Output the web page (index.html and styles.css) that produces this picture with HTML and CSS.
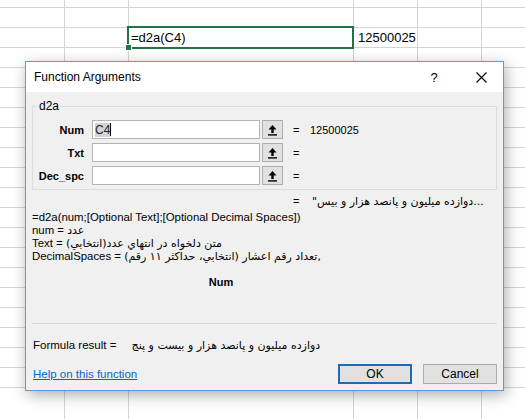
FILE: index.html
```html
<!DOCTYPE html>
<html>
<head>
<meta charset="utf-8">
<link rel="stylesheet" href="styles.css">
</head>
<body>
<div class="sheet">
  <div class="sheet-row">
    <div class="cell-sel">=d2a(C4)<span class="handle"></span></div>
    <div class="cell-val">12500025</div>
  </div>

  <div class="dialog">
    <div class="titlebar">
      <span class="title">Function Arguments</span>
      <span class="qmark">?</span>
      <span class="close">
        <svg width="11" height="11" viewBox="0 0 11 11"><path d="M0.5 0.5 L10.5 10.5 M10.5 0.5 L0.5 10.5" stroke="#000" stroke-width="1.1" fill="none"/></svg>
      </span>
    </div>
    <div class="body">
      <fieldset class="group">
        <legend>d2a</legend>
        <div class="arg">
          <span class="arg-label">Num</span>
          <div class="field">
            <div class="input"><span class="sel">C4</span><span class="caret"></span></div>
            <span class="ref-btn"><svg width="11" height="12" viewBox="0 0 11 12"><path d="M5.5 1 L1.5 5.5 H4.3 V9 H6.7 V5.5 H9.5 Z" fill="#000"/><rect x="1" y="10.2" width="9" height="1.4" fill="#000"/></svg></span>
          </div>
          <span class="eq">=</span>
          <span class="arg-val">12500025</span>
        </div>
        <div class="arg">
          <span class="arg-label">Txt</span>
          <div class="field">
            <div class="input"></div>
            <span class="ref-btn"><svg width="11" height="12" viewBox="0 0 11 12"><path d="M5.5 1 L1.5 5.5 H4.3 V9 H6.7 V5.5 H9.5 Z" fill="#000"/><rect x="1" y="10.2" width="9" height="1.4" fill="#000"/></svg></span>
          </div>
          <span class="eq">=</span>
          <span class="arg-val"></span>
        </div>
        <div class="arg">
          <span class="arg-label">Dec_spc</span>
          <div class="field">
            <div class="input"></div>
            <span class="ref-btn"><svg width="11" height="12" viewBox="0 0 11 12"><path d="M5.5 1 L1.5 5.5 H4.3 V9 H6.7 V5.5 H9.5 Z" fill="#000"/><rect x="1" y="10.2" width="9" height="1.4" fill="#000"/></svg></span>
          </div>
          <span class="eq">=</span>
          <span class="arg-val"></span>
        </div>
      </fieldset>

      <div class="result-line"><span class="eq">=</span><span class="fa">"دوازده میلیون و پانصد هزار و بیس...</span></div>

      <div class="desc">
        <div>=d2a(num;[Optional Text];[Optional Decimal Spaces])</div>
        <div>num = <span class="fa">عدد</span></div>
        <div>Text = <span class="fa">متن دلخواه در انتهاي عدد(انتخابي)</span></div>
        <div>DecimalSpaces = <span class="fa">تعداد رقم اعشار (انتخابي، حداکثر ۱۱ رقم),</span></div>
      </div>

      <div class="argname">Num</div>

      <div class="sep"></div>

      <div class="formula">Formula result = <span class="fa res">دوازده میلیون و پانصد هزار و بیست و پنج</span></div>

      <div class="footer">
        <a class="help" href="#">Help on this function</a>
        <div class="buttons">
          <span class="btn ok">OK</span>
          <span class="btn">Cancel</span>
        </div>
      </div>
    </div>
  </div>
</div>
</body>
</html>
```

FILE: styles.css
```css
html, body {
  margin: 0;
  padding: 0;
  overflow: hidden;
}
body {
  font-family: "Liberation Sans", "DejaVu Sans", sans-serif;
  color: #000;
}
.sheet {
  position: relative;
  width: 525px;
  height: 419px;
  background-color: #fff;
  background-image:
    linear-gradient(#d4d4d4, #d4d4d4),
    linear-gradient(#d4d4d4, #d4d4d4),
    linear-gradient(#d4d4d4, #d4d4d4),
    linear-gradient(#d4d4d4, #d4d4d4),
    linear-gradient(#d4d4d4, #d4d4d4),
    repeating-linear-gradient(to bottom, transparent 0 19px, #d4d4d4 19px 20px);
  background-size: 1px 100%, 1px 100%, 1px 100%, 1px 100%, 1px 100%, 100% 100%;
  background-position: 64px 0, 128px 0, 353px 0, 417px 0, 481px 0, 0 -12px;
  background-repeat: no-repeat, no-repeat, no-repeat, no-repeat, no-repeat, repeat;
  overflow: hidden;
}
.sheet-row {
  display: flex;
  padding-top: 26px;
  height: 23px;
  font-size: 13px;
}
.cell-sel {
  position: relative;
  margin-left: 127px;
  width: 227px;
  height: 23px;
  box-sizing: border-box;
  border: 2px solid #217346;
  padding-left: 2px;
  line-height: 19px;
  background: #fff;
}
.handle {
  position: absolute;
  left: -4px;
  bottom: -4px;
  width: 5px;
  height: 5px;
  background: #217346;
  border: 1px solid #fff;
}
.cell-val {
  padding-left: 4px;
  line-height: 23px;
}

/* dialog window */
.dialog {
  position: absolute;
  left: 25px;
  top: 61px;
  width: 479px;
  height: 330px;
  box-sizing: border-box;
  border: 1px solid #5b9bd9;
  background: #f0f0f0;
  box-shadow: 2px 4px 14px rgba(0, 0, 0, 0.32);
  display: flex;
  flex-direction: column;
  font-size: 11px;
}
.titlebar {
  height: 30px;
  background: #fff;
  display: flex;
  align-items: center;
  flex: none;
}
.title {
  margin-left: 8px;
  font-size: 12px;
  flex: 1;
}
.qmark {
  font-size: 13px;
  width: 10px;
  margin-right: 37px;
  text-align: center;
}
.close {
  width: 11px;
  height: 11px;
  margin-right: 16px;
  display: flex;
}
.body {
  flex: 1;
  display: flex;
  flex-direction: column;
  padding: 0 6px 8px 6px;
}
.group {
  margin: 7px 0 0 0;
  padding: 7px 0 4px 0;
  border: 1px solid #dcdcdc;
  border-radius: 0;
  min-width: 0;
  display: flex;
  flex-direction: column;
  gap: 4px;
}
.group legend {
  margin-left: 5px;
  padding: 0 1px;
  font-size: 12px;
  line-height: 14px;
}
.arg {
  display: flex;
  align-items: center;
  height: 19px;
}
.arg-label {
  width: 51px;
  text-align: right;
  font-weight: bold;
  flex: none;
}
.field {
  margin-left: 8px;
  display: flex;
  gap: 2px;
  height: 19px;
}
.input {
  width: 168px;
  height: 19px;
  box-sizing: border-box;
  border: 1px solid #b4b4b4;
  background: #fff;
  display: flex;
  align-items: center;
  padding-left: 2px;
  font-size: 12px;
}
.sel {
  background: #d4d4d4;
  color: #222;
  line-height: 14px;
}
.caret {
  width: 1px;
  height: 13px;
  background: #000;
}
.ref-btn {
  width: 21px;
  height: 19px;
  box-sizing: border-box;
  border: 1px solid #adadad;
  background: #e1e1e1;
  display: flex;
  align-items: center;
  justify-content: center;
}
.eq {
  margin-left: 10px;
  width: 17px;
  flex: none;
}
.arg-val {
  font-size: 11px;
}
.result-line {
  margin-top: 5px;
  margin-left: 261px;
  height: 13px;
  line-height: 13px;
  display: flex;
  white-space: nowrap;
}
.result-line .eq {
  margin-left: 0;
  width: 19px;
}
.fa {
  font-family: "DejaVu Sans", sans-serif;
  font-size: 11px;
}
.desc {
  margin-top: 3px;
  line-height: 13px;
  font-size: 11.4px;
}
.argname {
  margin-top: 12px;
  width: 378px;
  text-align: center;
  font-weight: bold;
  line-height: 14px;
}
.sep {
  margin-top: 34px;
  height: 1px;
  background: #dcdcdc;
  flex: none;
}
.formula {
  margin-top: 14px;
  margin-left: 1px;
  line-height: 14px;
  font-size: 11.5px;
}
.formula .res {
  margin-left: 12px;
}
.footer {
  margin-top: 11px;
  display: flex;
  align-items: center;
  justify-content: space-between;
}
.help {
  margin-left: 1px;
  color: #0066cc;
  font-size: 11.5px;
  text-decoration: underline;
}
.buttons {
  display: flex;
  gap: 11px;
}
.btn {
  width: 74px;
  height: 20px;
  box-sizing: border-box;
  border: 1px solid #adadad;
  background: #e1e1e1;
  display: flex;
  align-items: center;
  justify-content: center;
  font-size: 12px;
}
.btn.ok {
  border: 2px solid #1e6bb8;
}
```
